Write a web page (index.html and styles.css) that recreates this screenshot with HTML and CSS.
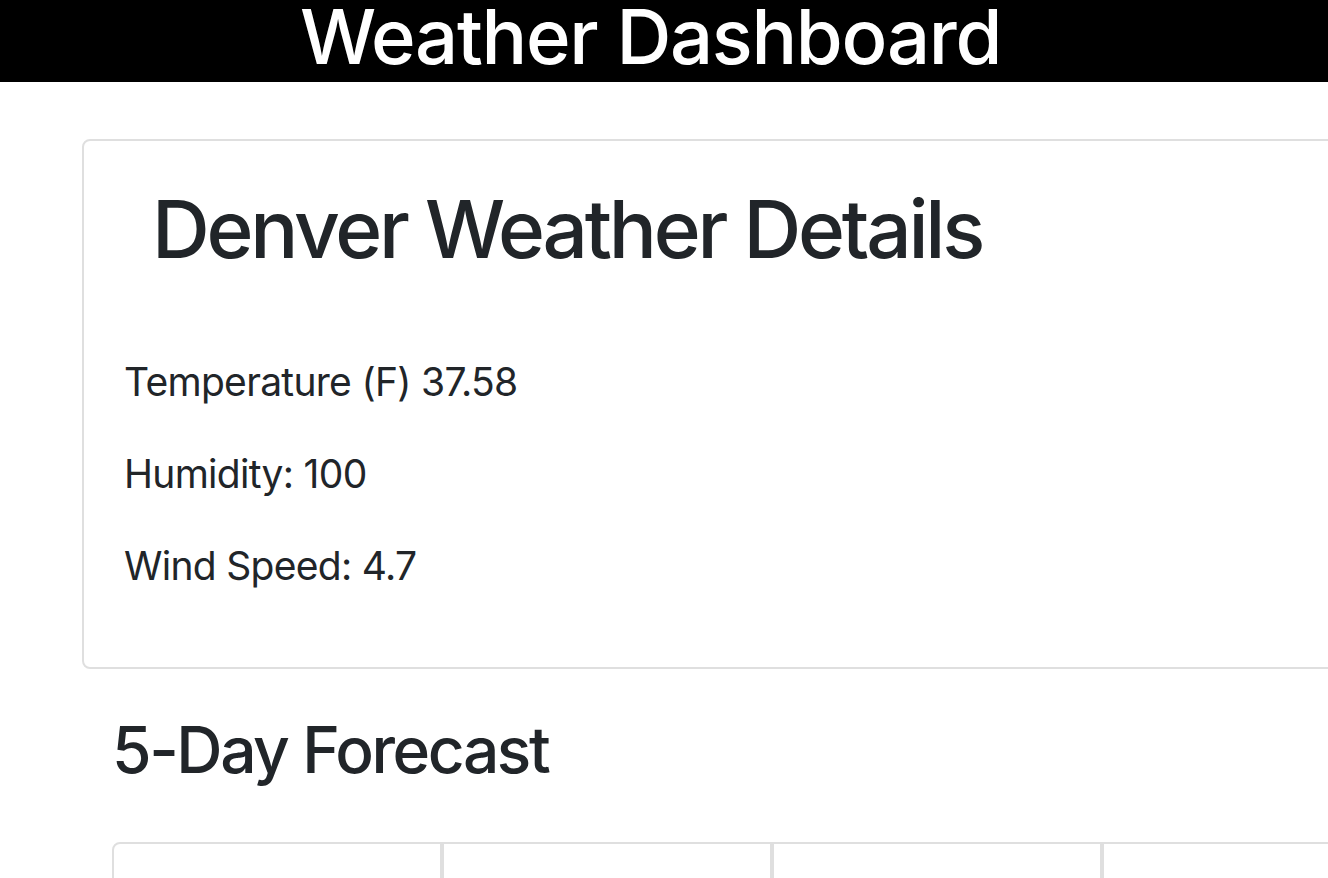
FILE: index.html
```html
<!DOCTYPE html>
<html lang="en">
<head>
<meta charset="utf-8">
<title>Weather Dashboard</title>
<link rel="stylesheet" href="styles.css">
</head>
<body>
  <header class="site-header">
    <h1 class="site-title">Weather Dashboard</h1>
  </header>
  <main class="main">
    <section class="details-card">
      <h2 class="details-title">Denver Weather Details</h2>
      <p class="detail">Temperature (F) 37.58</p>
      <p class="detail">Humidity: 100</p>
      <p class="detail">Wind Speed: 4.7</p>
    </section>
    <section class="forecast">
      <h3 class="forecast-title">5-Day Forecast</h3>
      <div class="forecast-group">
        <div class="forecast-card first"></div>
        <div class="forecast-card"></div>
        <div class="forecast-card"></div>
        <div class="forecast-card"></div>
        <div class="forecast-card"></div>
      </div>
    </section>
  </main>
</body>
</html>
```

FILE: styles.css
```css
html, body {
  margin: 0;
  padding: 0;
  overflow: hidden;
  background: #fff;
}
body {
  font-family: Inter, "Liberation Sans", Arial, sans-serif;
  color: #212529;
  width: 1328px;
  height: 878px;
}
.site-header {
  background: #000;
  height: 82px;
  padding-right: 27px;
  text-align: center;
  overflow: hidden;
}
.site-title {
  margin: 0;
  color: #fff;
  font-weight: 500;
  font-size: 76px;
  line-height: 72px;
  letter-spacing: -1.3px;
}
.main {
  padding-top: 57px;
  padding-left: 82px;
}
.details-card {
  width: 1400px;
  border: 2px solid #dfdfdf;
  border-radius: 8px;
  padding: 40px 40px 39px 40px;
  box-sizing: border-box;
}
.details-title {
  margin: 0 0 75px 0;
  padding-left: 28px;
  font-weight: 500;
  font-size: 80px;
  line-height: 96px;
  letter-spacing: -3.2px;
}
.detail {
  margin: 0 0 32px 0;
  font-size: 39px;
  line-height: 60px;
  font-weight: 400;
  letter-spacing: -0.7px;
}
.forecast {
  padding-top: 42px;
  padding-left: 30px;
}
.forecast-title {
  margin: 0 0 54px 0;
  font-weight: 500;
  font-size: 64px;
  line-height: 77px;
  letter-spacing: -2.4px;
}
.forecast-group {
  display: flex;
}
.forecast-card {
  flex: 0 0 330px;
  height: 300px;
  border: 2px solid #dfdfdf;
  box-sizing: border-box;
}
.forecast-card.first {
  border-top-left-radius: 8px;
}
```
